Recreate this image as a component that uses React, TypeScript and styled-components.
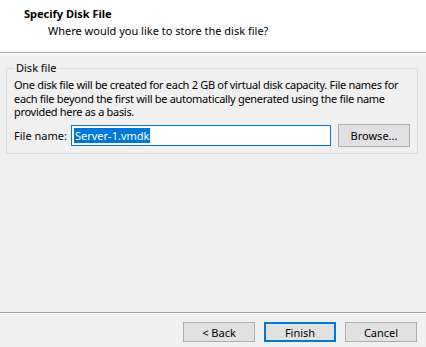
import React from "react";
import styled, { createGlobalStyle } from "styled-components";

const GlobalStyle = createGlobalStyle`
  html, body {
    margin: 0;
    padding: 0;
    background: #f0f0f0;
  }
  body {
    font-family: "Noto Sans", "Open Sans", sans-serif;
    font-size: 11px;
    color: #000;
  }
`;

const Window = styled.div`
  width: 426px;
  height: 347px;
  display: flex;
  flex-direction: column;
  background: #f0f0f0;
  overflow: hidden;
`;

const Header = styled.div`
  height: 53px;
  box-sizing: border-box;
  background: #fff;
  border-bottom: 1px solid #a0a0a0;
  box-shadow: 0 1px 0 #fff;
  padding: 6px 0 0 24px;
`;

const Title = styled.div`
  font-weight: 700;
  line-height: 16px;
`;

const Subtitle = styled.div`
  margin: 1px 0 0 24px;
  line-height: 16px;
`;

const Body = styled.div`
  flex: 1;
  padding: 8px 8px 0 6px;
`;

const Group = styled.fieldset`
  margin: 0;
  padding: 1px 7px 6px 7px;
  border: 1px solid #dcdcdc;
  border-radius: 0;
`;

const Legend = styled.legend`
  padding: 0 2px;
  margin-left: 0;
  line-height: 14px;
`;

const Info = styled.p`
  margin: 2px 0 0 0;
  line-height: 13.5px;
  white-space: nowrap;
  letter-spacing: -0.3px;
`;

const FileRow = styled.div`
  display: flex;
  align-items: center;
  margin-top: 5px;
`;

const Label = styled.label`
  width: 57px;
  flex: none;
`;

const Input = styled.div`
  width: 260px;
  height: 21px;
  box-sizing: border-box;
  border: 1px solid #0078d7;
  background: #fff;
  display: flex;
  align-items: center;
  padding-left: 2px;
`;

const Selected = styled.span`
  background: #0078d7;
  color: #fff;
  line-height: 15px;
  padding: 0 1px;
`;

const Button = styled.button<{ $default?: boolean }>`
  width: 72px;
  height: 20px;
  box-sizing: border-box;
  font: inherit;
  color: #000;
  background: #e1e1e1;
  border: ${(p) => (p.$default ? "2px solid #0078d7" : "1px solid #adadad")};
  border-radius: 0;
  padding: 0;
  flex: none;
`;

const BrowseButton = styled(Button)`
  height: 23px;
  margin-left: 7px;
`;

const Footer = styled.div`
  border-top: 1px solid #a0a0a0;
  box-shadow: inset 0 1px 0 #fff;
  height: 35px;
  box-sizing: border-box;
  display: flex;
  justify-content: flex-end;
  align-items: flex-start;
  gap: 9px;
  padding: 9px 9px 0 0;
`;

export default function App() {
  return (
    <Window>
      <GlobalStyle />
      <Header>
        <Title>Specify Disk File</Title>
        <Subtitle>Where would you like to store the disk file?</Subtitle>
      </Header>
      <Body>
        <Group>
          <Legend>Disk file</Legend>
          <Info>
            One disk file will be created for each 2 GB of virtual disk capacity. File names for
            <br />
            each file beyond the first will be automatically generated using the file name
            <br />
            provided here as a basis.
          </Info>
          <FileRow>
            <Label>File name:</Label>
            <Input>
              <Selected>Server-1.vmdk</Selected>
            </Input>
            <BrowseButton>Browse...</BrowseButton>
          </FileRow>
        </Group>
      </Body>
      <Footer>
        <Button>&lt; Back</Button>
        <Button $default>Finish</Button>
        <Button>Cancel</Button>
      </Footer>
    </Window>
  );
}
